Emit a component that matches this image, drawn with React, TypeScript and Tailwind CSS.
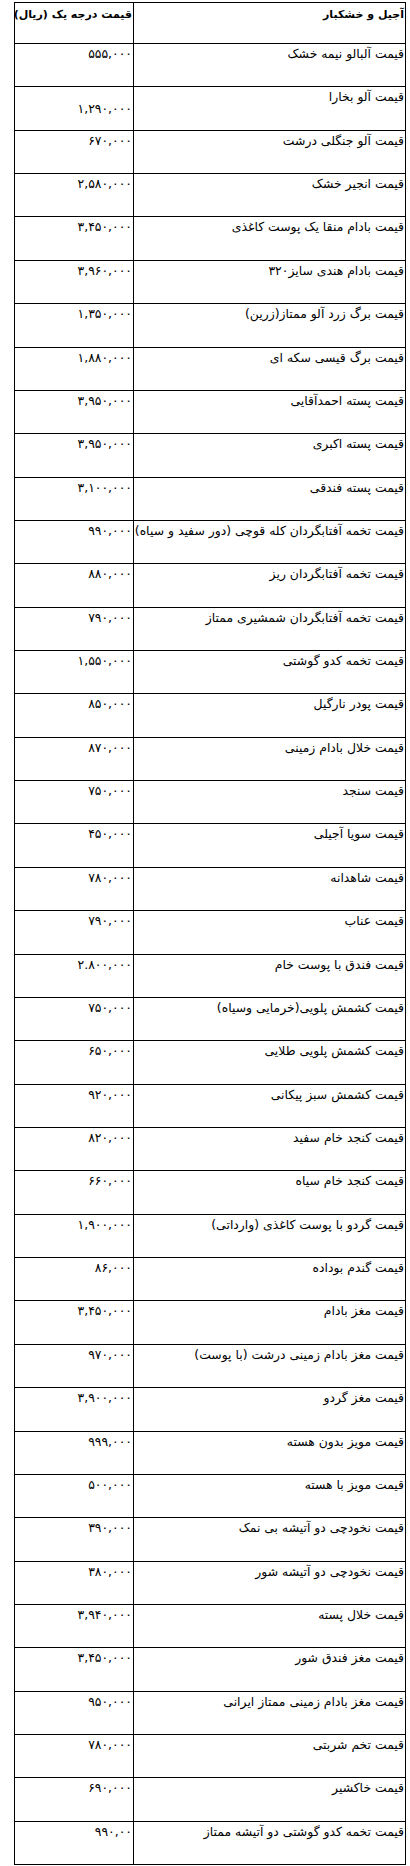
import React from 'react';

type Item = { name: string; price: string; middle?: boolean };

// لیست قیمت آجیل و خشکبار
const items: Item[] = [
  { name: 'قیمت آلبالو نیمه خشک', price: '۵۵۵,۰۰۰' },
  { name: 'قیمت آلو بخارا', price: '۱,۲۹۰,۰۰۰', middle: true },
  { name: 'قیمت آلو جنگلی درشت', price: '۶۷۰,۰۰۰' },
  { name: 'قیمت انجیر خشک', price: '۲,۵۸۰,۰۰۰' },
  { name: 'قیمت بادام منقا یک پوست کاغذی', price: '۳,۴۵۰,۰۰۰' },
  { name: 'قیمت بادام هندی سایز۳۲۰', price: '۳,۹۶۰,۰۰۰' },
  { name: 'قیمت برگ زرد آلو ممتاز(زرین)', price: '۱,۳۵۰,۰۰۰' },
  { name: 'قیمت برگ قیسی سکه ای', price: '۱,۸۸۰,۰۰۰' },
  { name: 'قیمت پسته احمدآقایی', price: '۳,۹۵۰,۰۰۰' },
  { name: 'قیمت پسته اکبری', price: '۳,۹۵۰,۰۰۰' },
  { name: 'قیمت پسته فندقی', price: '۳,۱۰۰,۰۰۰' },
  { name: 'قیمت تخمه آفتابگردان کله قوچی (دور سفید و سیاه)', price: '۹۹۰,۰۰۰' },
  { name: 'قیمت تخمه آفتابگردان ریز', price: '۸۸۰,۰۰۰' },
  { name: 'قیمت تخمه آفتابگردان شمشیری ممتاز', price: '۷۹۰,۰۰۰' },
  { name: 'قیمت تخمه کدو گوشتی', price: '۱,۵۵۰,۰۰۰' },
  { name: 'قیمت پودر نارگیل', price: '۸۵۰,۰۰۰' },
  { name: 'قیمت خلال بادام زمینی', price: '۸۷۰,۰۰۰' },
  { name: 'قیمت سنجد', price: '۷۵۰,۰۰۰' },
  { name: 'قیمت سویا آجیلی', price: '۴۵۰,۰۰۰' },
  { name: 'قیمت شاهدانه', price: '۷۸۰,۰۰۰' },
  { name: 'قیمت عناب', price: '۷۹۰,۰۰۰' },
  { name: 'قیمت فندق با پوست خام', price: '۲.۸۰۰,۰۰۰' },
  { name: 'قیمت کشمش پلویی(خرمایی وسیاه)', price: '۷۵۰,۰۰۰' },
  { name: 'قیمت کشمش پلویی طلایی', price: '۶۵۰,۰۰۰' },
  { name: 'قیمت کشمش سبز پیکانی', price: '۹۲۰,۰۰۰' },
  { name: 'قیمت کنجد خام سفید', price: '۸۲۰,۰۰۰' },
  { name: 'قیمت کنجد خام سیاه', price: '۶۶۰,۰۰۰' },
  { name: 'قیمت گردو با پوست کاغذی (وارداتی)', price: '۱,۹۰۰,۰۰۰' },
  { name: 'قیمت گندم بوداده', price: '۸۶,۰۰۰' },
  { name: 'قیمت مغز بادام', price: '۳,۴۵۰,۰۰۰' },
  { name: 'قیمت مغز بادام زمینی درشت (با پوست)', price: '۹۷۰,۰۰۰' },
  { name: 'قیمت مغز گردو', price: '۳,۹۰۰,۰۰۰' },
  { name: 'قیمت مویز بدون هسته', price: '۹۹۹,۰۰۰' },
  { name: 'قیمت مویز با هسته', price: '۵۰۰,۰۰۰' },
  { name: 'قیمت نخودچی دو آتیشه بی نمک', price: '۳۹۰,۰۰۰' },
  { name: 'قیمت نخودچی دو آتیشه شور', price: '۳۸۰,۰۰۰' },
  { name: 'قیمت خلال پسته', price: '۳,۹۴۰,۰۰۰' },
  { name: 'قیمت مغز فندق شور', price: '۳,۴۵۰,۰۰۰' },
  { name: 'قیمت مغز بادام زمینی ممتاز ایرانی', price: '۹۵۰,۰۰۰' },
  { name: 'قیمت تخم شربتی', price: '۷۸۰,۰۰۰' },
  { name: 'قیمت خاکشیر', price: '۶۹۰,۰۰۰' },
  { name: 'قیمت تخمه کدو گوشتی دو آتیشه ممتاز', price: '۹۹۰,۰۰' },
];

export default function App() {
  return (
    <div dir="rtl" className="bg-white w-[410px] pt-[2px] pr-[4px] font-['DejaVu_Sans',sans-serif] text-black">
      <table className="border-collapse table-fixed w-[391px] text-[12.4px] leading-[17px]">
        <colgroup>
          <col className="w-[272px]" />
          <col className="w-[119px]" />
        </colgroup>
        <thead>
          <tr className="h-[41px]">
            <th className="border border-black align-top text-right font-bold px-[1px] pt-[3px] text-[11px]">آجیل و خشکبار</th>
            <th className="border border-black align-top text-right font-bold px-[1px] pt-[3px] text-[11px] whitespace-nowrap">قیمت درجه یک (ریال)</th>
          </tr>
        </thead>
        <tbody>
          {items.map((item, i) => (
            <tr key={i} className="h-[43.36px]">
              <td className="border border-black align-top text-right px-[1px] pt-[1px] whitespace-nowrap">{item.name}</td>
              <td
                className={
                  item.middle
                    ? 'border border-black align-middle text-right px-[1px] whitespace-nowrap'
                    : 'border border-black align-top text-right px-[1px] pt-[1px] whitespace-nowrap'
                }
              >
                {item.price}
              </td>
            </tr>
          ))}
        </tbody>
      </table>
    </div>
  );
}
